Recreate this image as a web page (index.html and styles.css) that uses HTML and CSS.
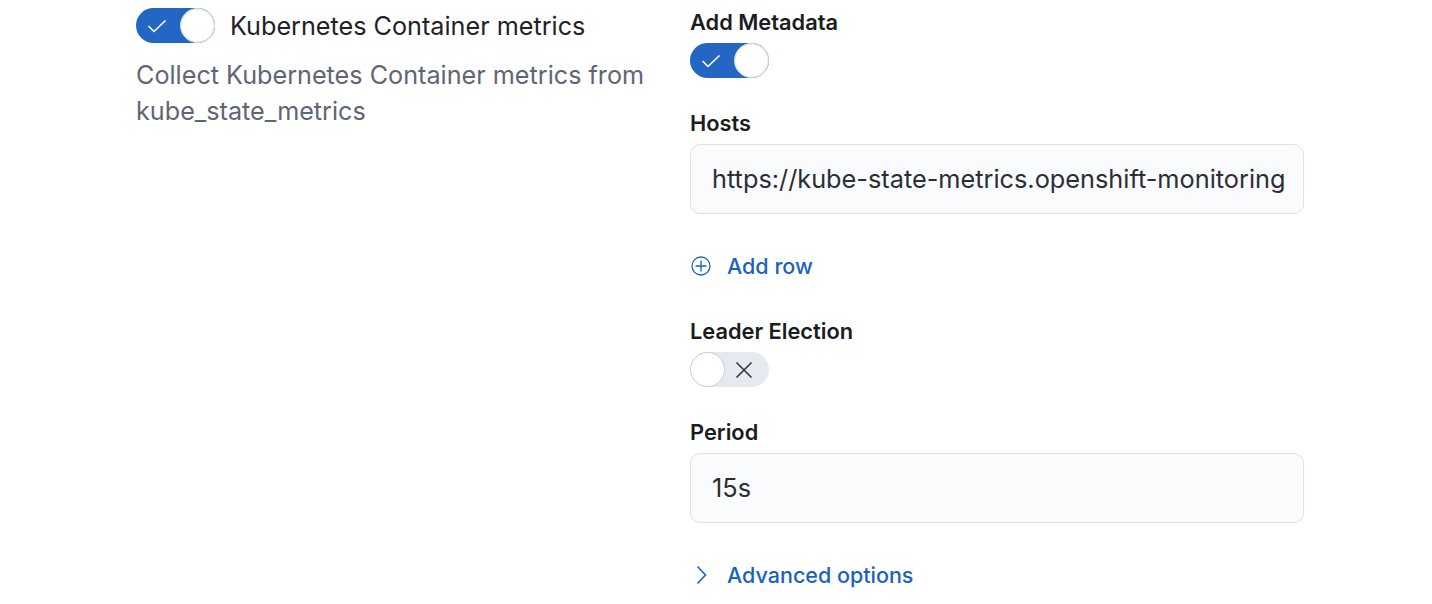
FILE: index.html
```html
<!DOCTYPE html>
<html>
<head>
<meta charset="utf-8">
<link rel="stylesheet" href="styles.css">
</head>
<body>
<div class="page">
  <div class="left">
    <div class="switch-row">
      <span class="switch on">
        <svg class="sw-icon check" width="20" height="14" viewBox="0 0 20 14"><path d="M1.5 7 L7 12.5 L18.5 1.5" fill="none" stroke="#fff" stroke-width="1.6"/></svg>
        <span class="knob"></span>
      </span>
      <span class="switch-label">Kubernetes Container metrics</span>
    </div>
    <p class="desc">Collect Kubernetes Container metrics from kube_state_metrics</p>
  </div>
  <div class="right">
    <div class="row first">
      <div class="label">Add Metadata</div>
      <span class="switch on">
        <svg class="sw-icon check" width="20" height="14" viewBox="0 0 20 14"><path d="M1.5 7 L7 12.5 L18.5 1.5" fill="none" stroke="#fff" stroke-width="1.6"/></svg>
        <span class="knob"></span>
      </span>
    </div>
    <div class="row">
      <div class="label">Hosts</div>
      <div class="field">https://kube-state-metrics.openshift-monitoring</div>
    </div>
    <div class="link add-row">
      <svg width="20" height="20" viewBox="0 0 20 20"><circle cx="10" cy="10" r="9" fill="none" stroke="currentColor" stroke-width="1.3"/><path d="M10 4.5 V15.5 M4.5 10 H15.5" stroke="currentColor" stroke-width="1.3"/></svg>
      <span>Add row</span>
    </div>
    <div class="row leader">
      <div class="label">Leader Election</div>
      <span class="switch off">
        <span class="knob"></span>
        <svg class="sw-icon cross" width="18" height="18" viewBox="0 0 18 18"><path d="M1.5 1.5 L16.5 16.5 M16.5 1.5 L1.5 16.5" stroke="#343741" stroke-width="1.6"/></svg>
      </span>
    </div>
    <div class="row">
      <div class="label">Period</div>
      <div class="field">15s</div>
    </div>
    <div class="link advanced">
      <svg width="20" height="20" viewBox="0 0 20 20"><path d="M6.5 1.5 L14.5 10 L6.5 18.5" fill="none" stroke="currentColor" stroke-width="1.6"/></svg>
      <span>Advanced options</span>
    </div>
  </div>
</div>
</body>
</html>
```

FILE: styles.css
```css
html, body {
  margin: 0;
  padding: 0;
  background: #ffffff;
}
body {
  font-family: Inter, "Noto Sans", "Liberation Sans", sans-serif;
  color: #1a1c21;
}
.page {
  display: flex;
  padding-left: 136px;
  padding-top: 8px;
}
.left {
  width: 530px;
  margin-right: 24px;
}
.switch-row {
  display: flex;
  align-items: center;
  gap: 15px;
}
.switch {
  box-sizing: border-box;
  width: 79px;
  height: 35px;
  border-radius: 18px;
  display: flex;
  align-items: center;
  flex-shrink: 0;
}
.switch.on {
  background: #2366c3;
  justify-content: space-between;
  padding-left: 11px;
}
.switch.off {
  background: #e6e9f0;
  justify-content: space-between;
  padding-right: 16px;
}
.knob {
  box-sizing: border-box;
  width: 35px;
  height: 35px;
  border-radius: 50%;
  background: #ffffff;
  border: 1.5px solid #c9cfdb;
}
.switch.on .knob {
  border-color: #d6dbe6;
  box-shadow: inset 0 0 0 1px #eef1f6;
}
.switch-label {
  font-size: 25.2px;
  line-height: 34px;
  color: #1f2228;
}
.desc {
  margin: 14px 0 0;
  font-size: 25.2px;
  line-height: 36px;
  color: #5f6673;
}
.right {
  width: 614px;
  display: flex;
  flex-direction: column;
}
.row {
  display: flex;
  flex-direction: column;
  align-items: flex-start;
  margin-top: 31px;
}
.row.first {
  margin-top: 0;
}
.label {
  font-size: 21.8px;
  line-height: 26px;
  font-weight: 600;
  color: #1a1c21;
  padding-top: 1px;
  margin-bottom: 8px;
}
.field {
  box-sizing: border-box;
  width: 614px;
  height: 70px;
  border: 1.5px solid #dde1ec;
  border-radius: 10px;
  background: #fafbfd;
  padding: 0 21px;
  font-size: 25.3px;
  line-height: 67px;
  color: #2b2e36;
  white-space: nowrap;
  overflow: hidden;
}
.link {
  display: flex;
  align-items: center;
  gap: 16px;
  color: #1b62c0;
  font-size: 21.5px;
  font-weight: 500;
  height: 36px;
}
.link svg {
  flex-shrink: 0;
}
.add-row {
  margin-top: 34px;
  padding-left: 1px;
}
.leader {
  margin-top: 33px;
}
.advanced {
  margin-top: 34px;
  padding-left: 1px;
}
```
